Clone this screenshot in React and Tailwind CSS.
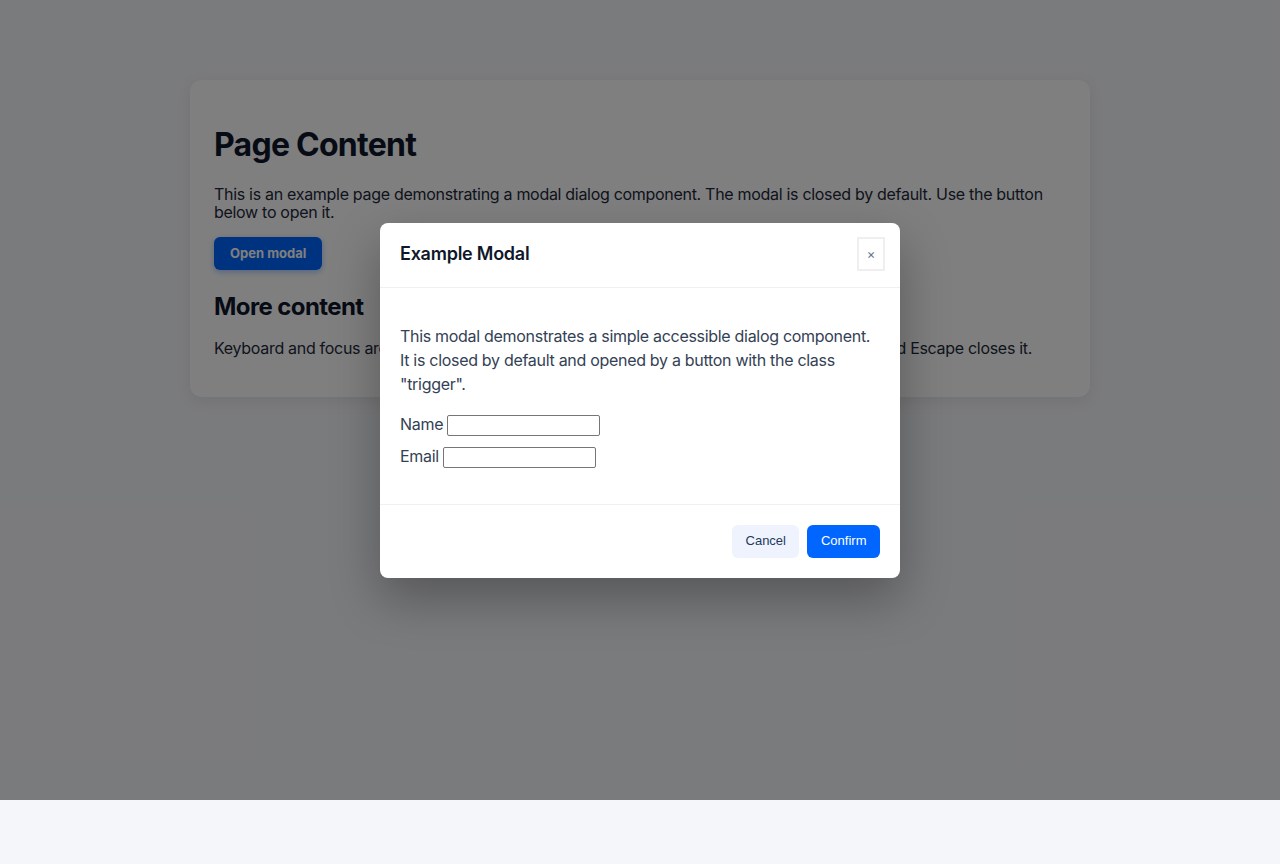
import React from "react";

const Modal = () => {
  return (
    <div
      role="dialog"
      aria-modal="true"
      className="w-[520px] rounded-lg bg-white shadow-[0_20px_50px_rgba(0,0,0,0.3)]"
    >
      {/* HEADER */}
      <div className="flex h-[65px] items-center justify-between border-b border-[#eef0f4] pl-5 pr-[15px]">
        <h2 className="mb-[2px] text-[18px] font-semibold leading-none tracking-[-0.25px] text-[#0f172a]">Example Modal</h2>
        <button className="mb-[1px] flex h-[34px] w-[28px] items-center justify-center border-2 border-[#efefef] bg-white text-[13px] leading-none text-[#64748b]">
          ×
        </button>
      </div>

      {/* BODY */}
      <div className="px-5 pt-9 pb-9 text-base leading-6 tracking-[-0.3px] text-[#334155]">
        <p className="mb-4">
          This modal demonstrates a simple accessible dialog component. It is closed by default and opened by a
          button with the class "trigger".
        </p>
        <div className="mb-2 h-6">
          <label>
            Name <input type="text" className="h-[21px] w-[153px] rounded-[2px] border border-[#767676] bg-white align-[-2px]" />
          </label>
        </div>
        <div className="h-6">
          <label>
            Email <input type="email" className="h-[21px] w-[153px] rounded-[2px] border border-[#767676] bg-white align-[-2px]" />
          </label>
        </div>
      </div>

      {/* FOOTER */}
      <div className="flex justify-end gap-2 border-t border-[#eef0f4] p-5 font-['Liberation_Sans',Arial,sans-serif] text-[13px]">
        <button className="h-[33px] rounded-md bg-[#eef3fd] px-[13.5px] text-[#1e3a5f]">Cancel</button>
        <button className="h-[33px] rounded-md bg-[#0066ff] px-[13.5px] text-white">Confirm</button>
      </div>
    </div>
  );
};

export default function App() {
  return (
    <div className="relative min-h-[864px] bg-[#f5f6fa] font-['Inter','Noto_Sans',sans-serif]">
      <div className="mx-auto w-[900px] pt-[80px]">
        <div className="rounded-xl bg-white p-6 shadow-[0_4px_16px_rgba(15,23,42,0.08)]">
          <h1 className="mt-[22px] mb-[21px] text-[32px] font-bold leading-[1.2] tracking-[-0.75px] text-[#0f172a]">
            Page Content
          </h1>
          <p className="mb-4 text-base leading-[18px] tracking-[-0.3px] text-[#1e293b]">
            This is an example page demonstrating a modal dialog component. The modal is closed by default. Use the
            button below to open it.
          </p>
          <button className="trigger h-[33px] rounded-md bg-[#0066ff] px-4 text-[13px] font-bold text-white shadow-[0_2px_6px_rgba(0,102,255,0.35)]">
            Open modal
          </button>
          <h2 className="mt-[23px] mb-[17px] text-2xl font-bold leading-[1.2] tracking-[-0.6px] text-[#0f172a]">
            More content
          </h2>
          <p className="mb-4 text-base leading-[18px] tracking-[-0.3px] text-[#1e293b]">
            Keyboard and focus are managed: focus is trapped inside the modal dialog while it is open, and Escape closes it.
          </p>
        </div>
      </div>

      {/* OVERLAY */}
      <div className="absolute inset-x-0 top-0 flex h-[800px] items-center justify-center bg-black/50">
        <Modal />
      </div>
    </div>
  );
}
